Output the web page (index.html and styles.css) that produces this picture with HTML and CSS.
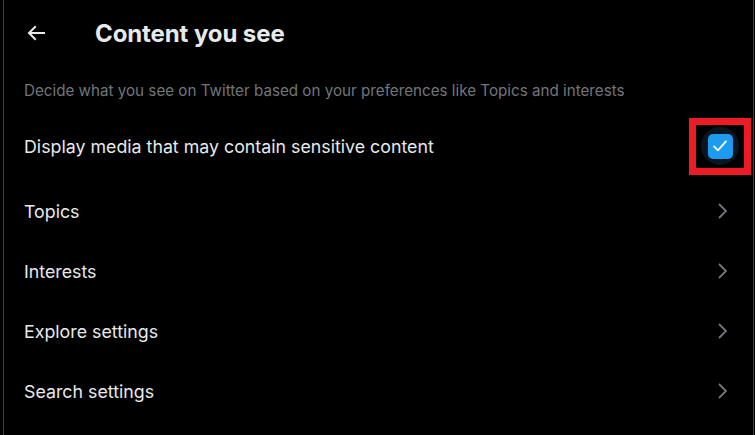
FILE: index.html
```html
<!DOCTYPE html>
<html lang="en">
<head>
<meta charset="utf-8">
<title>Content you see</title>
<link rel="stylesheet" href="styles.css">
</head>
<body>
<main class="panel">
  <header class="header">
    <button class="back" aria-label="Back">
      <svg viewBox="0 0 24 24" width="24" height="24"><path d="M7.414 13l5.043 5.04-1.414 1.42L3.586 12l7.457-7.46 1.414 1.42L7.414 11H21v2H7.414z" fill="#e7e9ea"/></svg>
    </button>
    <h1 class="title">Content you see</h1>
  </header>
  <p class="subtitle">Decide what you see on Twitter based on your preferences like Topics and interests</p>
  <div class="row row-check">
    <span class="label">Display media that may contain sensitive content</span>
    <span class="highlight">
      <span class="check-halo">
        <span class="check-box">
          <svg viewBox="0 0 24 24" width="22" height="22"><path d="M5.5 12.5l4.2 4.2L18.5 7" fill="none" stroke="#fff" stroke-width="2" stroke-linecap="round" stroke-linejoin="round"/></svg>
        </span>
      </span>
    </span>
  </div>
  <div class="row"><span class="label">Topics</span><svg class="chev" viewBox="0 0 12 18" width="12" height="18"><path d="M2 2l7 7-7 7" fill="none" stroke="#71767b" stroke-width="1.8"/></svg></div>
  <div class="row"><span class="label">Interests</span><svg class="chev" viewBox="0 0 12 18" width="12" height="18"><path d="M2 2l7 7-7 7" fill="none" stroke="#71767b" stroke-width="1.8"/></svg></div>
  <div class="row"><span class="label">Explore settings</span><svg class="chev" viewBox="0 0 12 18" width="12" height="18"><path d="M2 2l7 7-7 7" fill="none" stroke="#71767b" stroke-width="1.8"/></svg></div>
  <div class="row"><span class="label">Search settings</span><svg class="chev" viewBox="0 0 12 18" width="12" height="18"><path d="M2 2l7 7-7 7" fill="none" stroke="#71767b" stroke-width="1.8"/></svg></div>
</main>
</body>
</html>
```
FILE: styles.css
```css
* { box-sizing: border-box; }
html, body {
  margin: 0;
  padding: 0;
  background: #000;
  height: 100%;
  overflow: hidden;
}
body {
  font-family: Inter, "Liberation Sans", Arial, sans-serif;
  color: #e7e9ea;
}
.panel {
  margin-left: 3px;
  width: 751px;
  height: 435px;
  border-left: 1px solid #3e4144;
  border-right: 1px solid #3e4144;
  display: flex;
  flex-direction: column;
}
.header {
  height: 66px;
  display: flex;
  align-items: center;
  padding-left: 20px;
}
.back {
  background: none;
  border: 0;
  padding: 0;
  width: 24px;
  height: 24px;
  display: flex;
  align-items: center;
  justify-content: center;
}
.title {
  margin: 0 0 0 47px;
  font-size: 24px;
  font-weight: 700;
  letter-spacing: -0.1px;
  color: #e7e9ea;
}
.subtitle {
  margin: 0;
  height: 49px;
  display: flex;
  align-items: center;
  padding-left: 20px;
  font-size: 15.2px;
  color: #71767b;
}
.row {
  height: 60px;
  display: flex;
  align-items: center;
  justify-content: space-between;
  padding-left: 20px;
  padding-right: 24px;
}
.row-check {
  height: 62px;
  margin-bottom: 4px;
  padding-right: 2px;
}
.label {
  font-size: 17.8px;
  color: #e7e9ea;
}
.highlight {
  width: 62px;
  height: 57px;
  border: 7px solid #ed1c24;
  display: flex;
  align-items: center;
  justify-content: center;
}
.check-halo {
  width: 38px;
  height: 38px;
  border-radius: 50%;
  background: #0b1520;
  display: flex;
  align-items: center;
  justify-content: center;
}
.check-box {
  width: 25px;
  height: 25px;
  border-radius: 5px;
  background: #1d9bf0;
  display: flex;
  align-items: center;
  justify-content: center;
}
.chev { display: block; }
```
